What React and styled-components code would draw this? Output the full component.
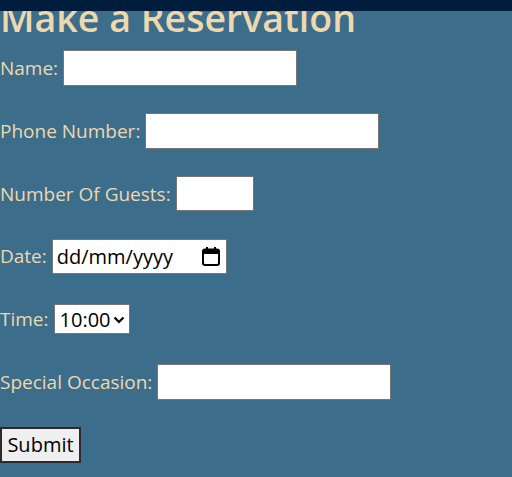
import React from 'react';
import styled, { createGlobalStyle } from 'styled-components';

const GlobalStyle = createGlobalStyle`
  html, body {
    margin: 0;
    padding: 0;
    background-color: #3c6d8b;
  }
  body {
    font-family: "Open Sans", "Noto Sans", sans-serif;
    overflow: hidden;
  }
`;

const TopBar = styled.div`
  position: fixed;
  top: 0;
  left: 0;
  right: 0;
  height: 11px;
  background-color: #011d3d;
  z-index: 2;
`;

const Page = styled.main`
  min-height: 477px;
  background-color: #3c6d8b;
  color: #eed8ae;
`;

const Title = styled.h1`
  margin: -1px 0 0 0;
  padding: 0;
  font-size: 37.5px;
  font-weight: 600;
  line-height: 37px;
  color: #eed8ae;
  white-space: nowrap;
`;

const Form = styled.form`
  display: flex;
  flex-direction: column;
  gap: 26.8px;
  margin-top: 14px;
`;

const Row = styled.div`
  display: flex;
  align-items: center;
  gap: 5px;
  height: 36px;
`;

const Label = styled.label`
  font-size: 19px;
  color: #eed8ae;
  white-space: nowrap;
`;

const TextInput = styled.input`
  box-sizing: border-box;
  width: ${p => p.$width || 234}px;
  height: ${p => p.$height || 36}px;
  border: 1px solid #767676;
  background: #ffffff;
  padding: 1px 4px;
  font-family: "Open Sans", sans-serif;
  font-size: 20px;
  outline: none;
  margin: 0;
`;

const DateField = styled.div`
  box-sizing: border-box;
  width: 175px;
  height: 35px;
  border: 1px solid #767676;
  background: #ffffff;
  display: flex;
  align-items: center;
  justify-content: space-between;
  padding: 0 6px 0 4px;
  color: #000000;
  font-size: 20px;
`;

const SelectBox = styled.div`
  position: relative;
  box-sizing: border-box;
  width: 76px;
  height: 30px;
  border: 1px solid #767676;
  background: #ffffff;
`;

const Select = styled.select`
  appearance: none;
  box-sizing: border-box;
  width: 100%;
  height: 100%;
  border: none;
  background: transparent;
  font-family: "Open Sans", sans-serif;
  font-size: 20px;
  color: #000000;
  padding: 0 0 0 5px;
  outline: none;
`;

const Chevron = styled.svg`
  position: absolute;
  right: 4px;
  top: 11px;
  pointer-events: none;
`;

const SubmitButton = styled.button`
  box-sizing: border-box;
  width: 81px;
  height: 36px;
  border: 2px solid #2b2b2b;
  background: #efefef;
  color: #000000;
  font-family: "Open Sans", sans-serif;
  font-size: 20px;
  padding: 0;
  margin: 0;
`;

const CalendarIcon = () => (
  <svg width="18" height="20" viewBox="0 0 18 20">
    <rect x="1" y="3.5" width="16" height="15.5" rx="2" fill="none" stroke="#000" strokeWidth="2" />
    <rect x="1" y="4" width="16" height="4" fill="#000" />
    <rect x="4" y="1" width="2" height="4" fill="#000" />
    <rect x="12" y="1" width="2" height="4" fill="#000" />
  </svg>
);

const App = () => (
  <>
    <GlobalStyle />
    <TopBar />
    <Page>
      <Title>Make a Reservation</Title>
      <Form onSubmit={e => e.preventDefault()}>
        <Row>
          <Label htmlFor="name">Name:</Label>
          <TextInput id="name" type="text" />
        </Row>
        <Row>
          <Label htmlFor="phone">Phone Number:</Label>
          <TextInput id="phone" type="text" />
        </Row>
        <Row>
          <Label htmlFor="guests">Number Of Guests:</Label>
          <TextInput id="guests" type="text" $width={78} $height={35} />
        </Row>
        <Row>
          <Label>Date:</Label>
          <DateField>
            <span>dd/mm/yyyy</span>
            <CalendarIcon />
          </DateField>
        </Row>
        <Row>
          <Label htmlFor="time">Time:</Label>
          <SelectBox>
            <Select id="time" defaultValue="10:00">
              <option>10:00</option>
              <option>11:00</option>
              <option>12:00</option>
            </Select>
            <Chevron width="12" height="8" viewBox="0 0 12 8">
              <path d="M1.5 1.5 L6 6 L10.5 1.5" fill="none" stroke="#000" strokeWidth="2.2" />
            </Chevron>
          </SelectBox>
        </Row>
        <Row>
          <Label htmlFor="occasion">Special Occasion:</Label>
          <TextInput id="occasion" type="text" />
        </Row>
        <Row>
          <SubmitButton type="submit">Submit</SubmitButton>
        </Row>
      </Form>
    </Page>
  </>
);

export default App;
